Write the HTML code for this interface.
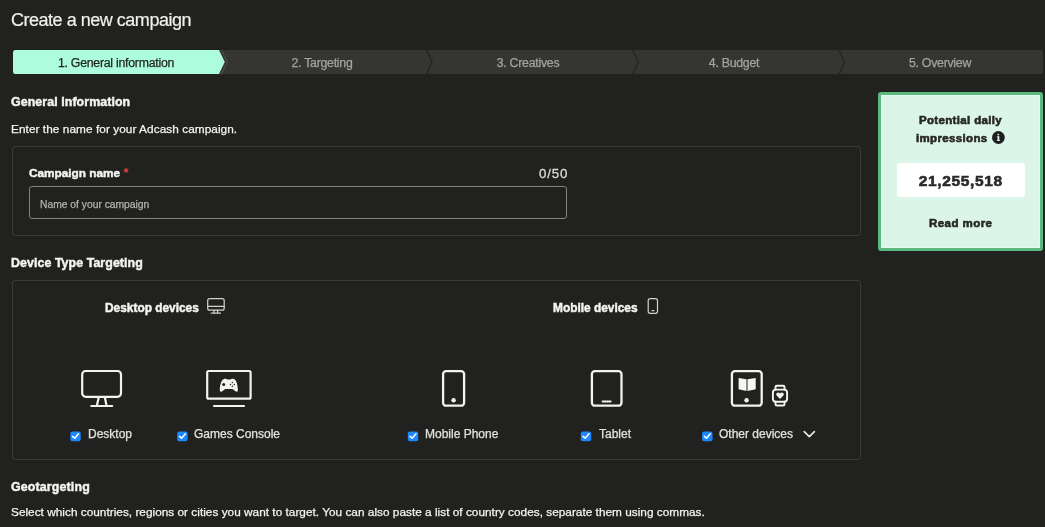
<!DOCTYPE html>
<html><head><meta charset="utf-8">
<style>
html,body{margin:0;padding:0;}
body{width:1045px;height:527px;overflow:hidden;background:#21211f;position:relative;font-family:"Liberation Sans",sans-serif;color:#f4f4f2;}
.t{position:absolute;white-space:nowrap;line-height:1;will-change:transform;}
.b{font-weight:700;-webkit-text-stroke:0.45px currentColor;}
.r{-webkit-text-stroke:0.25px currentColor;}
.box{position:absolute;box-sizing:border-box;border:1px solid #3b3b36;border-radius:3px;}
svg{position:absolute;left:0;top:0;overflow:visible;}
.cb{position:absolute;width:10px;height:10px;border-radius:2px;background:#1a84ff;}
.ctr{text-align:center;}
</style></head>
<body>
<div class="t" style="left:10.5px;top:11.2px;font-size:18px;letter-spacing:-0.48px;color:#f0f0ee;-webkit-text-stroke:0.2px #f0f0ee;">Create a new campaign</div>

<!-- steps bar -->
<svg width="1045" height="527" style="width:1045px;height:527px;">
  <rect x="13" y="50" width="1030" height="24" rx="2.5" fill="#353631"/>
  <path d="M15.5,50 H219 L224.8,62 L219,74 H15.5 Q13,74 13,71.5 V52.5 Q13,50 15.5,50 Z" fill="#acfcdd"/>
  <polyline points="220,49.5 225.8,62 220,74.5" fill="none" stroke="#30302d" stroke-width="0.9"/>
  <polyline points="221.3,49.5 227,62 221.3,74.5" fill="none" stroke="#4b4b47" stroke-width="1.4"/>
  <polyline points="426.3,49.5 432,62 426.3,74.5" fill="none" stroke="#262624" stroke-width="1.6"/>
  <polyline points="632.6,49.5 638.3,62 632.6,74.5" fill="none" stroke="#262624" stroke-width="1.6"/>
  <polyline points="838.9,49.5 844.6,62 838.9,74.5" fill="none" stroke="#262624" stroke-width="1.6"/>
</svg>
<div class="t r ctr" style="left:13px;width:206px;top:56.6px;font-size:12.3px;letter-spacing:-0.25px;color:#1f2220;">1. General information</div>
<div class="t r ctr" style="left:219px;width:206px;top:56.6px;font-size:12.3px;letter-spacing:-0.25px;color:#a4a49e;">2. Targeting</div>
<div class="t r ctr" style="left:425px;width:206px;top:56.6px;font-size:12.3px;letter-spacing:-0.25px;color:#a4a49e;">3. Creatives</div>
<div class="t r ctr" style="left:631px;width:206px;top:56.6px;font-size:12.3px;letter-spacing:-0.25px;color:#a4a49e;">4. Budget</div>
<div class="t r ctr" style="left:837px;width:206px;top:56.6px;font-size:12.3px;letter-spacing:-0.25px;color:#a4a49e;">5. Overview</div>

<!-- General information -->
<div class="t b" style="left:11px;top:95.8px;font-size:12.4px;letter-spacing:0.08px;">General information</div>
<div class="t r" style="left:10.8px;top:123.8px;font-size:11.8px;letter-spacing:0.065px;">Enter the name for your Adcash campaign.</div>

<div class="box" style="left:12px;top:146px;width:849px;height:90px;"></div>
<div class="t b" style="left:29px;top:166.2px;font-size:11.8px;">Campaign name <span style="color:#e8413f;font-size:13px;position:relative;top:0px;-webkit-text-stroke:0;">*</span></div>
<div class="t" style="left:538.5px;top:166.8px;font-size:13.3px;letter-spacing:0.85px;color:#dcdcd8;-webkit-text-stroke:0.3px #dcdcd8;">0/50</div>
<div class="box" style="left:29px;top:186px;width:538px;height:33px;border-color:#858477;"></div>
<div class="t r" style="left:39.7px;top:199.6px;font-size:10.3px;color:#b3b3ad;">Name of your campaign</div>

<!-- Device type -->
<div class="t b" style="left:11px;top:257px;font-size:12.4px;letter-spacing:0.07px;">Device Type Targeting</div>
<div class="box" style="left:12px;top:280px;width:849px;height:180px;"></div>
<div class="t b" style="left:104.7px;top:302.7px;font-size:11.9px;">Desktop devices</div>
<div class="t b" style="left:553px;top:302.7px;font-size:11.9px;">Mobile devices</div>

<svg width="1045" height="527" style="width:1045px;height:527px;" fill="none" stroke-linecap="round" stroke-linejoin="round">
  <!-- small desktop icon -->
  <g stroke="#d2d2ce" stroke-width="1.2">
    <rect x="207.7" y="298.7" width="16.5" height="11.5" rx="2"/>
    <line x1="207.7" y1="306.4" x2="224.2" y2="306.4"/>
    <line x1="214" y1="310.2" x2="214" y2="312.8"/>
    <line x1="217.6" y1="310.2" x2="217.6" y2="312.8"/>
    <line x1="211.3" y1="313.2" x2="220.5" y2="313.2"/>
  </g>
  <!-- small phone icon -->
  <g stroke="#d2d2ce" stroke-width="1.2">
    <rect x="648.2" y="298.7" width="9.3" height="14.6" rx="2"/>
    <line x1="652" y1="310.6" x2="653.8" y2="310.6"/>
  </g>
  <!-- big desktop -->
  <g stroke="#f2f2f0" stroke-width="2.2">
    <rect x="82.2" y="371" width="38.8" height="25.8" rx="3.5"/>
    <polyline points="98.6,398 97,405"/>
    <polyline points="105,398 106.4,405"/>
    <line x1="91.3" y1="406" x2="112.2" y2="406"/>
  </g>
  <!-- games console -->
  <g stroke="#f2f2f0" stroke-width="2.2">
    <rect x="207.2" y="371" width="43.4" height="27.7" rx="1.5"/>
    <line x1="214" y1="406" x2="244" y2="406"/>
  </g>
  <path fill="#f2f2f0" d="M224,378.9 C226,378.6 227.5,379.6 228.9,379.6 C230.3,379.6 231.8,378.6 233.8,378.9 C236.2,379.3 237.9,385 237.9,390 C237.9,391.8 236.6,392.2 235.4,391.3 C234,390.2 233.2,389 232,389 L225.8,389 C224.6,389 223.8,390.2 222.4,391.3 C221.2,392.2 219.8,391.8 219.8,390 C219.8,385 221.6,379.3 224,378.9 Z"/>
  <circle cx="223.7" cy="384.4" r="1.5" fill="#21211f"/>
  <g fill="#2a2a28"><circle cx="232.4" cy="382.5" r="0.75"/><circle cx="230.5" cy="384.4" r="0.75"/><circle cx="234.3" cy="384.4" r="0.75"/><circle cx="232.4" cy="386.3" r="0.75"/></g>
  <!-- mobile phone -->
  <g stroke="#f2f2f0" stroke-width="2.3">
    <rect x="443.1" y="371.1" width="21" height="34.6" rx="3"/>
  </g>
  <circle cx="453.6" cy="400.2" r="2.2" fill="#f2f2f0"/>
  <!-- tablet -->
  <g stroke="#f2f2f0" stroke-width="2.3">
    <rect x="591.9" y="371.1" width="29.6" height="34.6" rx="3"/>
    <line x1="602.6" y1="401.4" x2="610.6" y2="401.4" stroke-width="2"/>
  </g>
  <!-- e-reader -->
  <g stroke="#f2f2f0" stroke-width="2.3">
    <rect x="731.9" y="371.1" width="29.8" height="34.6" rx="3"/>
  </g>
  <circle cx="746.6" cy="400.2" r="2.2" fill="#f2f2f0"/>
  <path fill="#f6f6f4" d="M738.6,378 L746.5,379.2 L746.5,391 L738.6,389.3 Z M747.5,379.2 L755.7,378 L755.7,389.3 L747.5,391 Z"/>
  <!-- watch -->
  <g stroke="#f4f4f2" stroke-width="1.9">
    <rect x="772.9" y="389.6" width="14.2" height="12.2" rx="3"/>
    <path d="M775.5,389.6 V387 Q775.5,385.7 776.8,385.7 H783.2 Q784.5,385.7 784.5,387 V389.6"/>
    <path d="M775.5,401.8 V404.2 Q775.5,405.5 776.8,405.5 H783.2 Q784.5,405.5 784.5,404.2 V401.8"/>
  </g>
  <path fill="#f4f4f2" d="M780,399 L776.6,395.6 Q775.6,394.2 776.6,393.2 Q778.4,391.8 780,393.6 Q781.6,391.8 783.4,393.2 Q784.4,394.2 783.4,395.6 Z"/>
  <!-- chevron down -->
  <polyline points="804.2,431.6 809.3,436.6 814.4,431.6" stroke="#e8e8e5" stroke-width="1.6"/>
</svg>

<!-- checkboxes -->
<svg width="1045" height="527" style="width:1045px;height:527px;"><rect x="70.3" y="431.4" width="10.4" height="9.8" rx="2" fill="#1c87ff"/><rect x="177.2" y="431.4" width="10.4" height="9.8" rx="2" fill="#1c87ff"/><rect x="407.8" y="431.4" width="10.4" height="9.8" rx="2" fill="#1c87ff"/><rect x="580.8" y="431.4" width="10.4" height="9.8" rx="2" fill="#1c87ff"/><rect x="702.1" y="431.4" width="10.4" height="9.8" rx="2" fill="#1c87ff"/>
<g fill="none" stroke="#fff" stroke-width="1.5" stroke-linecap="round" stroke-linejoin="round"><polyline points="72.5,436.4 74.7,438.2 78.5,433.8"/><polyline points="179.4,436.4 181.6,438.2 185.4,433.8"/><polyline points="410.0,436.4 412.2,438.2 416.0,433.8"/><polyline points="583.0,436.4 585.2,438.2 589.0,433.8"/><polyline points="704.3,436.4 706.5,438.2 710.3,433.8"/></g></svg>
<div class="t r" style="left:88px;top:428.3px;font-size:12px;color:#e2e2df;">Desktop</div>
<div class="t r" style="left:194px;top:428.3px;font-size:12px;color:#e2e2df;">Games Console</div>
<div class="t r" style="left:425px;top:428.3px;font-size:12px;color:#e2e2df;">Mobile Phone</div>
<div class="t r" style="left:598.6px;top:428.3px;font-size:12px;color:#e2e2df;">Tablet</div>
<div class="t r" style="left:719px;top:428.3px;font-size:12px;color:#e2e2df;">Other devices</div>

<!-- Geotargeting -->
<div class="t b" style="left:11px;top:480.6px;font-size:12.4px;letter-spacing:0.15px;">Geotargeting</div>
<div class="t r" style="left:10.9px;top:507.3px;font-size:11.8px;letter-spacing:0.02px;">Select which countries, regions or cities you want to target. You can also paste a list of country codes, separate them using commas.</div>

<!-- right panel -->
<div style="position:absolute;left:878px;top:92px;width:165px;height:159px;box-sizing:border-box;border:3px solid #5cb97e;border-radius:3px;background:#dcf5e9;"></div>
<div style="position:absolute;left:881px;top:95px;width:159px;height:153px;box-sizing:border-box;border:1px solid #e5faef;"></div>
<div class="t b ctr" style="left:878px;width:165px;top:115.2px;font-size:11.5px;letter-spacing:0.35px;color:#262726;-webkit-text-stroke:0.6px #262726;">Potential daily</div>
<div class="t b" style="left:916.3px;top:132.8px;font-size:11.5px;letter-spacing:0.35px;color:#262726;-webkit-text-stroke:0.6px #262726;">impressions</div>
<svg width="1045" height="527" style="width:1045px;height:527px;">
  <circle cx="998.4" cy="137.5" r="6.4" fill="#1f1f1f"/>
  <rect x="997.5" y="136.4" width="1.8" height="4.4" fill="#dcf5e9"/>
  <rect x="996.9" y="140" width="3" height="0.9" fill="#dcf5e9"/>
  <rect x="996.9" y="136.4" width="2.2" height="0.8" fill="#dcf5e9"/>
  <circle cx="998.3" cy="134.6" r="0.95" fill="#dcf5e9"/>
</svg>
<div style="position:absolute;left:897px;top:163px;width:128px;height:34px;background:#fff;border-radius:3px;"></div>
<div class="t b ctr" style="left:878px;width:165px;top:173.3px;font-size:15.5px;letter-spacing:0.65px;text-indent:0.65px;color:#2a2a2a;-webkit-text-stroke:0.6px #2a2a2a;">21,255,518</div>
<div class="t b ctr" style="left:878px;width:165px;top:218.2px;font-size:11.5px;letter-spacing:0.45px;text-indent:0.45px;color:#262726;-webkit-text-stroke:0.6px #262726;">Read more</div>
</body></html>
